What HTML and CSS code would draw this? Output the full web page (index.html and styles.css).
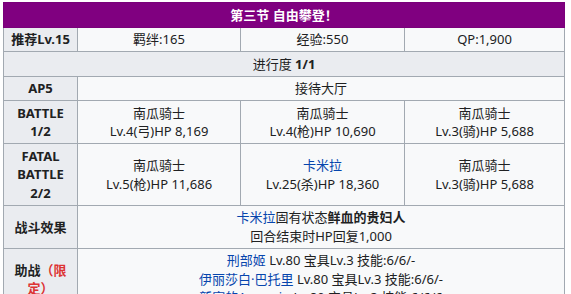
FILE: index.html
```html
<!DOCTYPE html>
<html lang="zh">
<head>
<meta charset="utf-8">
<title>第三节 自由攀登！</title>
<link rel="stylesheet" href="styles.css">
</head>
<body>
<div class="wrap">
<table class="quest">
  <colgroup>
    <col class="c1"><col class="c2"><col class="c3"><col class="c4">
  </colgroup>
  <tr>
    <th class="title" colspan="4">第三节 自由攀登！</th>
  </tr>
  <tr>
    <th>推荐Lv.15</th>
    <td>羁绊:165</td>
    <td>经验:550</td>
    <td>QP:1,900</td>
  </tr>
  <tr>
    <th class="progress" colspan="4">进行度 <b>1/1</b></th>
  </tr>
  <tr>
    <th>AP5</th>
    <td colspan="3">接待大厅</td>
  </tr>
  <tr>
    <th>BATTLE<br>1/2</th>
    <td>南瓜骑士<br>Lv.4(弓)HP 8,169</td>
    <td>南瓜骑士<br>Lv.4(枪)HP 10,690</td>
    <td>南瓜骑士<br>Lv.3(骑)HP 5,688</td>
  </tr>
  <tr>
    <th>FATAL<br>BATTLE<br>2/2</th>
    <td>南瓜骑士<br>Lv.5(枪)HP 11,686</td>
    <td><a class="link">卡米拉</a><br>Lv.25(杀)HP 18,360</td>
    <td>南瓜骑士<br>Lv.3(骑)HP 5,688</td>
  </tr>
  <tr>
    <th>战斗效果</th>
    <td colspan="3"><a class="link">卡米拉</a>固有状态<b>鲜血的贵妇人</b><br>回合结束时HP回复1,000</td>
  </tr>
  <tr>
    <th>助战<span class="red">（限定）</span></th>
    <td colspan="3"><a class="link">刑部姬</a> Lv.80 宝具Lv.3 技能:6/6/-<br><a class="link">伊丽莎白·巴托里</a> Lv.80 宝具Lv.3 技能:6/6/-<br><a class="link">新宿的Assassin</a> Lv.80 宝具Lv.3 技能:6/6/6</td>
  </tr>
</table>
</div>
</body>
</html>
```
FILE: styles.css
```css
html, body {
  margin: 0;
  padding: 0;
  background: #ffffff;
  overflow: hidden;
}
.wrap {
  padding: 2px 0 0 3px;
}
.quest {
  width: 561px;
  table-layout: fixed;
  border-collapse: collapse;
  font-family: "Noto Sans", "Noto Sans CJK SC", sans-serif;
  font-size: 13px;
  line-height: 18.4px;
  color: #202122;
  background: #f8f9fa;
}
.c1 { width: 74px; }
.c2 { width: 163px; }
.c3 { width: 164px; }
.c4 { width: 160px; }
.quest th, .quest td {
  border: 1px solid #a2a9b1;
  padding: 2.6px 5px;
  text-align: center;
  vertical-align: middle;
}
.quest th {
  background: #eaecf0;
  font-weight: bold;
}
.quest td {
  font-weight: normal;
}
.quest th.title {
  background: #800080;
  color: #ffffff;
  border-color: #7a007a;
}
.quest th.progress {
  font-weight: normal;
}
.link {
  color: #0645ad;
  text-decoration: none;
}
.red {
  color: #dd3333;
}
```
